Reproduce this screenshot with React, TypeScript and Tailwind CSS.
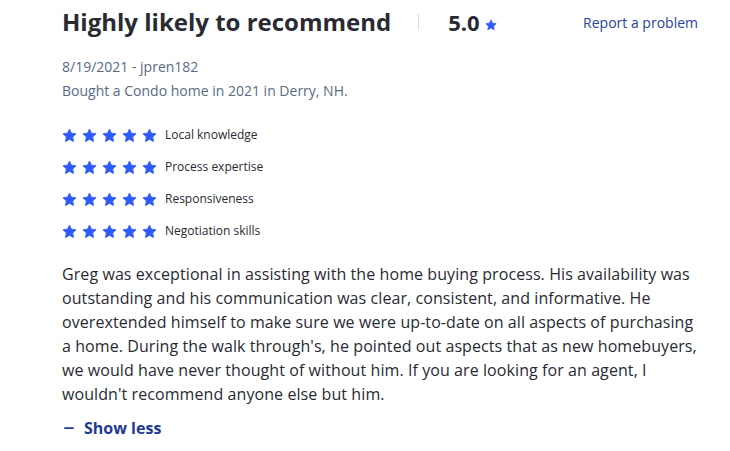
import { Minus } from 'lucide-react'

const CATEGORIES = ['Local knowledge', 'Process expertise', 'Responsiveness', 'Negotiation skills']

const Star = ({ size = 15 }: { size?: number }) => (
  <svg width={size} height={size} viewBox="0 0 24 24" className="shrink-0">
    <path
      d="M12 1.8l3.1 6.6 7.2.9-5.3 5 1.4 7.2L12 18l-6.4 3.5 1.4-7.2-5.3-5 7.2-.9z"
      fill="#2f5bfa"
      stroke="#2f5bfa"
      strokeWidth="1.5"
      strokeLinejoin="round"
    />
  </svg>
)

export default function App() {
  return (
    <div className="min-h-[451px] bg-white pl-[62px] pr-[30px] pt-[6px] font-['Open_Sans',sans-serif] text-[#2a2a33]">
      <div className="flex items-center">
        <h2 className="text-[24px] font-bold leading-[32px] text-[#2a2a33]">Highly likely to recommend</h2>
        <span className="ml-[27px] mr-[29px] h-[16px] w-px bg-[#d8dbe0]" />
        <span className="text-[22px] font-bold leading-[32px]">5.0</span>
        <span className="ml-[5px] mt-[6px]">
          <Star size={12} />
        </span>
        <a className="ml-auto pr-[2px] text-[14px] text-[#2a4397]">Report a problem</a>
      </div>

      <div className="mt-[17px] text-[14px] leading-[24px] text-[#596b82]">
        <p>8/19/2021 - jpren182</p>
        <p>Bought a Condo home in 2021 in Derry, NH.</p>
      </div>

      <ul className="mt-[16px] flex flex-col">
        {CATEGORIES.map((c) => (
          <li key={c} className="flex h-[32px] items-center">
            <div className="flex gap-[5px]">
              {[0, 1, 2, 3, 4].map((i) => (
                <Star key={i} />
              ))}
            </div>
            <span className="ml-[8px] text-[12px] text-[#2a2a33]">{c}</span>
          </li>
        ))}
      </ul>

      <p className="mt-[15px] max-w-[638px] text-[16px] leading-[24px] tracking-[0.08px] text-[#2a2a33]">
        Greg was exceptional in assisting with the home buying process. His availability was outstanding and his
        communication was clear, consistent, and informative. He overextended himself to make sure we were
        up-to-date on all aspects of purchasing a home. During the walk through's, he pointed out aspects that as new
        homebuyers, we would have never thought of without him. If you are looking for an agent, I wouldn't
        recommend anyone else but him.
      </p>

      <button className="mt-[10px] flex items-center gap-[8px] text-[16px] font-bold text-[#1f3a93]">
        <Minus size={14} strokeWidth={3} />
        Show less
      </button>
    </div>
  )
}
